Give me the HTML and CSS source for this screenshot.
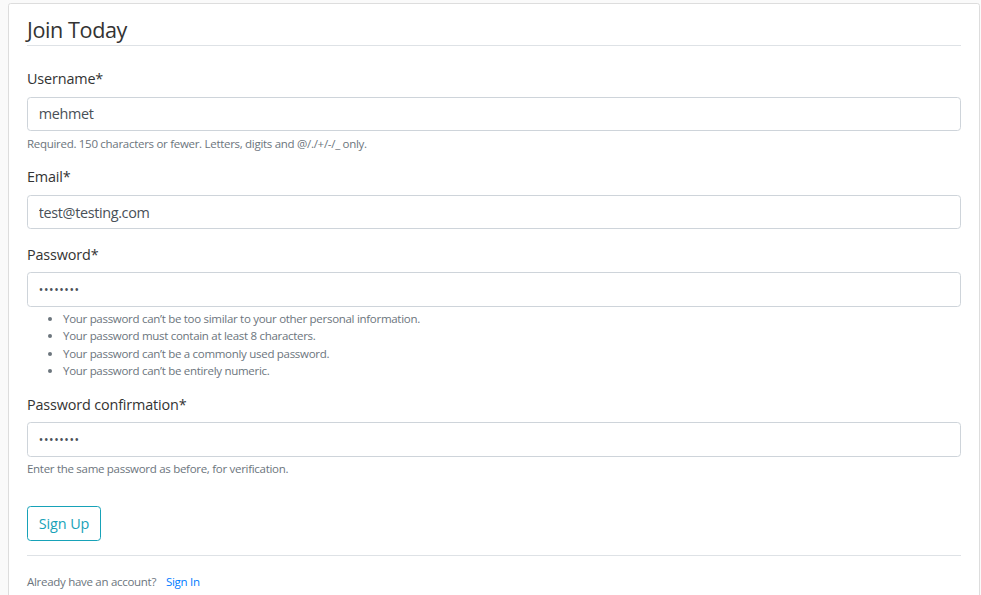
FILE: index.html
```html
<!DOCTYPE html>
<html lang="en">
<head>
<meta charset="utf-8">
<title>Join Today</title>
<link rel="stylesheet" href="styles.css">
</head>
<body>
<div class="page">
  <div class="content-section">
    <form>
      <fieldset class="fieldset">
        <legend class="legend">Join Today</legend>
        <div class="form-group">
          <label class="label" for="username">Username*</label>
          <input class="input" id="username" type="text" value="mehmet">
          <small class="form-text">Required. 150 characters or fewer. Letters, digits and @/./+/-/_ only.</small>
        </div>
        <div class="form-group">
          <label class="label" for="email">Email*</label>
          <input class="input" id="email" type="email" value="test@testing.com">
        </div>
        <div class="form-group">
          <label class="label" for="password1">Password*</label>
          <input class="input input-pw" id="password1" type="password" value="12345678">
          <small class="form-text">
            <ul class="help-list">
              <li>Your password can’t be too similar to your other personal information.</li>
              <li>Your password must contain at least 8 characters.</li>
              <li>Your password can’t be a commonly used password.</li>
              <li>Your password can’t be entirely numeric.</li>
            </ul>
          </small>
        </div>
        <div class="form-group">
          <label class="label" for="password2">Password confirmation*</label>
          <input class="input input-pw" id="password2" type="password" value="12345678">
          <small class="form-text">Enter the same password as before, for verification.</small>
        </div>
      </fieldset>
      <div class="form-group">
        <button class="btn-outline" type="button">Sign Up</button>
      </div>
    </form>
    <div class="footer">
      <small class="muted">Already have an account? <a class="link" href="#">Sign In</a></small>
    </div>
  </div>
</div>
</body>
</html>
```
FILE: styles.css
```css
html, body {
  margin: 0;
  padding: 0;
}
body {
  background: #fafafa;
  color: #333333;
  font-family: "Open Sans", "Noto Sans", sans-serif;
  font-size: 14.4px;
  line-height: 1.5;
}
.page {
  padding: 3px 1px 0 8px;
}
.content-section {
  background: #ffffff;
  border: 1px solid #dddddd;
  border-radius: 2.7px;
  padding: 9px 18px 9px;
  height: 620px;
  box-sizing: border-box;
}
form {
  margin: 0;
}
.fieldset {
  border: 0;
  margin: 0 0 14.4px;
  padding: 0;
  min-width: 0;
}
.legend {
  display: block;
  width: 100%;
  padding: 2px 0 0;
  margin: 0 0 21.6px;
  height: 33.4px;
  box-sizing: border-box;
  font-size: 21.6px;
  line-height: 1.4;
  letter-spacing: -0.4px;
  color: #333333;
  border-bottom: 1px solid #dee2e6;
}
.form-group {
  margin-bottom: 14.4px;
}
.label {
  display: block;
  margin-bottom: 7.2px;
  color: #333333;
  letter-spacing: -0.15px;
}
.input {
  display: block;
  width: 100%;
  box-sizing: border-box;
  height: 34.2px;
  padding: 5.4px 10.8px;
  font-family: inherit;
  font-size: 14.4px;
  line-height: 1.5;
  letter-spacing: -0.35px;
  color: #495057;
  background: #ffffff;
  border: 1px solid #ced4da;
  border-radius: 3.6px;
  margin: 0;
}
.input-pw {
  letter-spacing: 0.6px;
  font-size: 12px;
}
.form-text {
  display: block;
  margin-top: 3.6px;
  font-size: 11.52px;
  letter-spacing: -0.3px;
  color: #6c757d;
}
.help-list {
  margin: 0 0 14.4px;
  padding-left: 36px;
}
.btn-outline {
  display: inline-block;
  font-family: inherit;
  font-size: 14.4px;
  line-height: 1.5;
  padding: 5.4px 10.8px;
  color: #17a2b8;
  background: transparent;
  border: 1px solid #17a2b8;
  border-radius: 3.6px;
  margin: 0;
  letter-spacing: -0.1px;
}
.footer {
  border-top: 1px solid #dee2e6;
  padding-top: 14.4px;
}
.muted {
  font-size: 11.52px;
  letter-spacing: -0.3px;
  color: #6c757d;
}
.link {
  color: #007bff;
  text-decoration: none;
  margin-left: 7.2px;
}
```
